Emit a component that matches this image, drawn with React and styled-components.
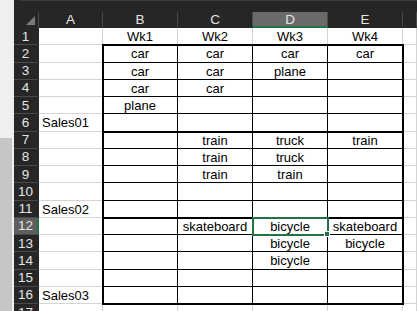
import React from "react";
import styled, { createGlobalStyle, css } from "styled-components";

const GlobalStyle = createGlobalStyle`
  html, body {
    margin: 0;
    padding: 0;
    background: #fff;
  }
  body {
    font-family: "Liberation Sans", Arial, sans-serif;
    overflow: hidden;
  }
`;

const GREEN = "#217346";

const COLUMNS = ["A", "B", "C", "D", "E", ""];

const BLOCKS = [
  {
    label: "Sales01",
    rows: [
      ["car", "car", "car", "car"],
      ["car", "car", "plane", ""],
      ["car", "car", "", ""],
      ["plane", "", "", ""],
      ["", "", "", ""],
    ],
  },
  {
    label: "Sales02",
    rows: [
      ["", "train", "truck", "train"],
      ["", "train", "truck", ""],
      ["", "train", "train", ""],
      ["", "", "", ""],
      ["", "", "", ""],
    ],
  },
  {
    label: "Sales03",
    rows: [
      ["", "skateboard", "bicycle", "skateboard"],
      ["", "", "bicycle", "bicycle"],
      ["", "", "bicycle", ""],
      ["", "", "", ""],
      ["", "", "", ""],
    ],
  },
];

// active cell is D12
const ACTIVE_ROW = 12;
const ACTIVE_COL = 2; // index inside a block (B=0 .. E=3) -> D

const Window = styled.div`
  display: flex;
  width: 417px;
  height: 311px;
  overflow: hidden;
`;

const Gutter = styled.div`
  width: 14px;
  flex: none;
  display: flex;
  flex-direction: column;
  background: #efefef;
`;

const GutterThumb = styled.div`
  margin-top: 138px;
  width: 12px;
  flex: 1;
  background: #c6c6c6;
`;

const Sheet = styled.div`
  flex: 1;
  min-width: 0;
  display: flex;
  flex-direction: column;
  background: #fff;
`;

const TopEdgeWrap = styled.div`
  background: #262626;
  flex: none;
`;

const TopEdge = styled.div`
  height: 12px;
  box-sizing: border-box;
  background: #262626;
  border-top: 1px solid #3d3d3d;
  margin-left: 6px;
`;

const Grid = styled.div`
  display: grid;
  grid-template-columns: 25px 64px repeat(4, 75px) 1fr;
  grid-template-rows: 16px repeat(17, 17.25px);
`;

const place = css`
  ${(p) => p.$row && `grid-row: ${p.$row};`}
  ${(p) => p.$col && `grid-column: ${p.$col};`}
`;

const Corner = styled.div`
  grid-row: 1;
  grid-column: 1;
  box-sizing: border-box;
  background: #262626;
  border-right: 1px solid #4a4a4a;
  display: flex;
  align-items: flex-end;
  justify-content: flex-end;
  padding: 0 3px 3px 0;

  svg {
    display: block;
  }
`;

const ColHead = styled.div`
  ${place}
  box-sizing: border-box;
  background: ${(p) => (p.$active ? "#6a6a6a" : "#262626")};
  border-right: 1px solid #4a4a4a;
  border-bottom: 2px solid ${(p) => (p.$active ? GREEN : "#262626")};
  color: #e4e4e4;
  font-size: 13.5px;
  display: flex;
  align-items: center;
  justify-content: center;
  padding-top: 1px;
`;

const RowHead = styled.div`
  ${place}
  box-sizing: border-box;
  background: ${(p) => (p.$active ? "#5e5e5e" : "#262626")};
  border-bottom: 1px solid #4a4a4a;
  border-right: 2px solid ${(p) => (p.$active ? GREEN : "#262626")};
  color: #e4e4e4;
  font-size: 13.5px;
  display: flex;
  align-items: center;
  justify-content: center;
`;

const Cell = styled.div`
  ${place}
  position: relative;
  box-sizing: border-box;
  border-right: 1px solid ${(p) => (p.$ink ? "#000" : "#d4d4d4")};
  border-bottom: 1px solid ${(p) => (p.$ink ? "#000" : "#d4d4d4")};
  display: flex;
  align-items: center;
  justify-content: ${(p) => (p.$left ? "flex-start" : "center")};
  padding: 1px 3px 0;
  font-size: 13px;
  color: #000;
  white-space: nowrap;

  ${(p) =>
    p.$selected &&
    css`
      z-index: 2;
      outline: 2px solid ${GREEN};
      outline-offset: -1px;

      &::after {
        content: "";
        position: absolute;
        right: -3px;
        bottom: -3px;
        width: 4px;
        height: 4px;
        background: ${GREEN};
        border: 1px solid #fff;
      }
    `}
`;

const Block = styled.div`
  grid-column: 3 / 7;
  grid-row: ${(p) => p.$row} / span 5;
  display: grid;
  grid-template-columns: subgrid;
  grid-template-rows: subgrid;
  position: relative;
  z-index: 1;
  outline: 2px solid #000;
  outline-offset: -1px;
`;

function CornerMark() {
  return (
    <svg width="9" height="9" viewBox="0 0 9 9">
      <path d="M9 0 L9 9 L0 9 Z" fill="#7a7a7a" />
    </svg>
  );
}

function SheetRowSide({ n, label }) {
  const row = n + 1;
  return (
    <>
      <RowHead $row={row} $col={1} $active={n === ACTIVE_ROW}>
        {n}
      </RowHead>
      <Cell $row={row} $col={2} $left>
        {label}
      </Cell>
      <Cell $row={row} $col={7} />
    </>
  );
}

export default function App() {
  return (
    <>
      <GlobalStyle />
      <Window>
        <Gutter>
          <GutterThumb />
        </Gutter>
        <Sheet>
          <TopEdgeWrap>
            <TopEdge />
          </TopEdgeWrap>
          <Grid>
            <Corner>
              <CornerMark />
            </Corner>
            {COLUMNS.map((c, i) => (
              <ColHead key={i} $row={1} $col={i + 2} $active={c === "D"}>
                {c}
              </ColHead>
            ))}

            {/* row 1: week headers */}
            <RowHead $row={2} $col={1}>
              1
            </RowHead>
            <Cell $row={2} $col={2} />
            {["Wk1", "Wk2", "Wk3", "Wk4"].map((w, i) => (
              <Cell key={w} $row={2} $col={i + 3}>
                {w}
              </Cell>
            ))}
            <Cell $row={2} $col={7} />

            {BLOCKS.map((b, bi) => {
              const first = 2 + bi * 5;
              return (
                <React.Fragment key={b.label}>
                  {b.rows.map((_, ri) => (
                    <SheetRowSide
                      key={ri}
                      n={first + ri}
                      label={ri === 4 ? b.label : ""}
                    />
                  ))}
                  <Block $row={first + 1}>
                    {b.rows.map((r, ri) =>
                      r.map((v, ci) => (
                        <Cell
                          key={`${ri}-${ci}`}
                          $ink
                          $selected={first + ri === ACTIVE_ROW && ci === ACTIVE_COL}
                        >
                          {v}
                        </Cell>
                      ))
                    )}
                  </Block>
                </React.Fragment>
              );
            })}

            {/* row 17, cut off at the bottom */}
            <RowHead $row={18} $col={1}>
              17
            </RowHead>
            {[2, 3, 4, 5, 6, 7].map((c) => (
              <Cell key={c} $row={18} $col={c} />
            ))}
          </Grid>
        </Sheet>
      </Window>
    </>
  );
}
